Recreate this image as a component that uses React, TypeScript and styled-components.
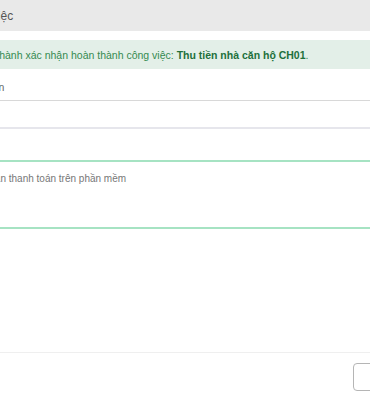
import styled, { createGlobalStyle } from 'styled-components';

const GlobalStyle = createGlobalStyle`
  html, body {
    margin: 0;
    padding: 0;
    background: #fff;
    overflow: hidden;
  }
  body {
    font-family: "Liberation Sans", Arial, "Noto Sans", sans-serif;
    color: #555;
  }
`;

const Viewport = styled.div`
  width: 370px;
  height: 400px;
  overflow: hidden;
`;

// the modal is wider than the window; its left part lies outside the frame
const Modal = styled.div`
  width: 703px;
  margin-left: -170px;
  display: flex;
  flex-direction: column;
  background: #fff;
`;

const Header = styled.div`
  height: 31px;
  display: flex;
  align-items: center;
  padding: 0 15px;
  background: #e9e9e9;
`;

const Title = styled.h4`
  margin: 0;
  font-size: 12px;
  font-weight: 400;
  color: #555;
  white-space: nowrap;
`;

const Body = styled.div`
  display: flex;
  flex-direction: column;
  padding: 9px 15px 0 15px;
  height: 312px;
`;

const Alert = styled.div`
  height: 29px;
  display: flex;
  align-items: center;
  padding: 0 14px;
  background: #e3efe8;
  color: #348a50;
  font-size: 10.5px;
  white-space: nowrap;
  strong {
    color: #21703b;
    font-weight: 700;
  }
`;

const Field = styled.div`
  display: flex;
  flex-direction: column;
  gap: 6px;
  margin-top: 11px;
`;

const Label = styled.label`
  font-size: 10.5px;
  line-height: 14px;
  color: #666;
  white-space: nowrap;
`;

const Input = styled.div`
  height: 26px;
  border: 1px solid #e6e6ec;
  border-top: 1px solid #d8d8d8;
  border-bottom-width: 2px;
`;

const TextArea = styled.div`
  margin-top: 31px;
  height: 54px;
  padding: 11px 10px 0 10px;
  border: 2px solid #a6e3c3;
  font-size: 10px;
  color: #777;
  white-space: nowrap;
`;

const Footer = styled.div`
  display: flex;
  justify-content: flex-end;
  align-items: center;
  height: 48px;
  padding: 0 15px;
  border-top: 1px solid #efefef;
`;

const Actions = styled.div`
  display: flex;
  gap: 10px;
`;

const Button = styled.button`
  height: 28px;
  padding: 0 18px;
  border: 1px solid #b5b5b5;
  border-radius: 4px;
  background: #fff;
  color: #333;
  font-family: inherit;
  font-size: 12px;
`;

export default function App() {
  return (
    <Viewport>
      <GlobalStyle />
      <Modal>
        <Header>
          <Title>Xác nhận hoàn thành công việc</Title>
        </Header>
        <Body>
          <Alert>
            <span>
              Bạn vừa thực hiện việc hoàn thành xác nhận hoàn thành công việc:{' '}
              <strong>Thu tiền nhà căn hộ CH01</strong>.
            </span>
          </Alert>
          <Field>
            <Label>Tài khoản đã nhận tiền thanh toán</Label>
            <Input />
          </Field>
          <TextArea>Ghi chú: khách hàng đã xác nhận thanh toán trên phần mềm</TextArea>
        </Body>
        <Footer>
          <Actions>
            <Button>Đóng</Button>
            <Button>Xác nhận</Button>
          </Actions>
        </Footer>
      </Modal>
    </Viewport>
  );
}
